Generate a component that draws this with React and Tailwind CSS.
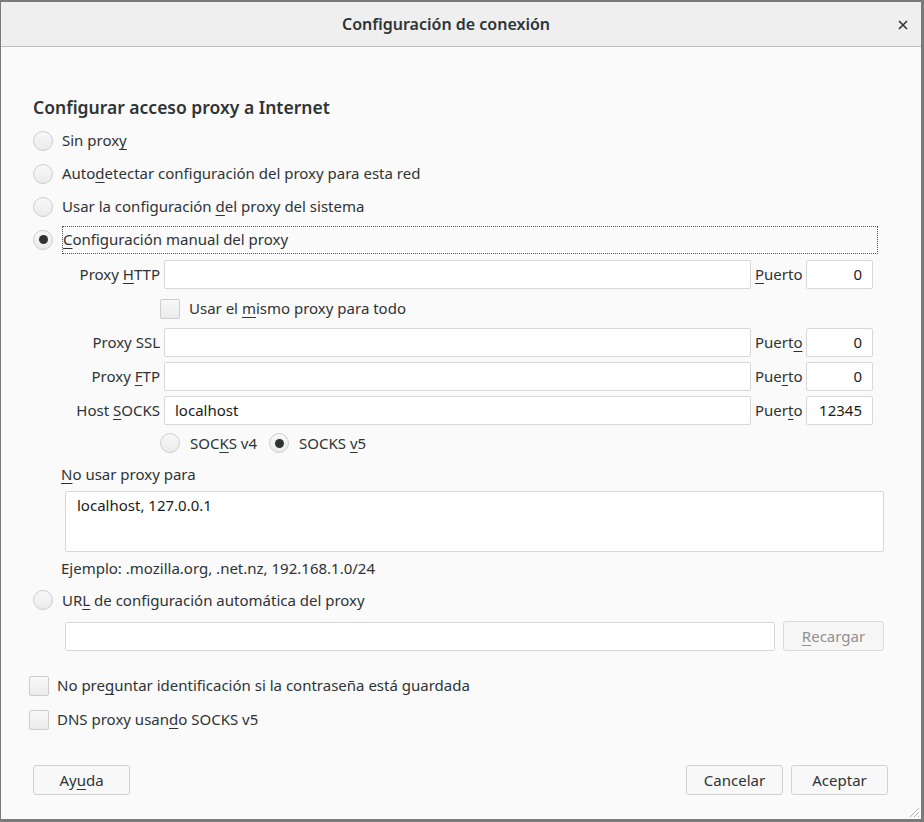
import React from "react";

const U = ({ children }) => (
  <span className="underline decoration-1 underline-offset-[3px]">{children}</span>
);

const Radio = ({ checked }) => (
  <span className="flex h-[20px] w-[20px] shrink-0 items-center justify-center rounded-full border border-[#cdcdcd] bg-gradient-to-b from-[#f8f8f8] to-[#ebebeb]">
    {checked && <span className="h-[9px] w-[9px] rounded-full bg-[#2e3436]"></span>}
  </span>
);

const Check = () => (
  <span className="block h-[20px] w-[20px] shrink-0 rounded-[2px] border border-[#cdcdcd] bg-gradient-to-b from-[#f8f8f8] to-[#ebebeb]"></span>
);

const Input = ({ value, className = "", right }) => (
  <div
    className={`flex h-[29px] items-center overflow-hidden whitespace-nowrap rounded-[2px] border border-[#d8d8d8] bg-white px-[10px] text-[#1b1b1b] ${
      right ? "justify-end" : ""
    } ${className}`}
  >
    {value}
  </div>
);

const ProxyRow = ({ label, value, port, puerto }) => (
  <div className="flex h-[29px] items-center">
    <div className="w-[103px] whitespace-nowrap pr-[4px] text-right">{label}</div>
    <Input value={value} className="flex-1" />
    <div className="w-[55px] pl-[4px]">{puerto}</div>
    <Input value={port} right className="w-[67px]" />
  </div>
);

export default function App() {
  return (
    <div
      className="h-[822px] w-[924px] bg-[#7a7a7a] pb-[3px] pl-[1px] pr-[3px] pt-[2px] text-[15px] text-[#2e3436]"
      style={{ fontFamily: '"Noto Sans", "Open Sans", sans-serif' }}
    >
      <div className="relative flex h-full flex-col bg-[#fafafa]">
        {/* title bar */}
        <div className="relative flex h-[45px] shrink-0 items-center justify-center border-b border-[#bfbfbf] bg-[#efefef] pr-[30px]">
          <span className="text-[16px] font-semibold text-[#2e3436]">Configuración de conexión</span>
          <svg className="absolute right-[13px] top-[18px]" width="10" height="10" viewBox="0 0 10 10">
            <path d="M1 1 L9 9 M9 1 L1 9" stroke="#2e3436" strokeWidth="1.6" />
          </svg>
        </div>

        <div className="flex flex-col pl-[32px] pt-[48px]">
          <h2 className="h-[25px] text-[17.5px] font-semibold leading-[25px]">
            Configurar acceso proxy a Internet
          </h2>

          <div className="mt-[4px] flex flex-col">
            <label className="flex h-[33px] items-center gap-[9px]">
              <Radio />
              <span>Sin prox<U>y</U></span>
            </label>
            <label className="flex h-[33px] items-center gap-[9px]">
              <Radio />
              <span>Auto<U>d</U>etectar configuración del proxy para esta red</span>
            </label>
            <label className="flex h-[33px] items-center gap-[9px]">
              <Radio />
              <span>Usar la configuración <U>d</U>el proxy del sistema</span>
            </label>
            <label className="flex h-[33px] items-center gap-[9px]">
              <Radio checked />
              <span className="flex h-[28px] w-[816px] items-center border border-dotted border-[#555]">
                <span><U>C</U>onfiguración manual del proxy</span>
              </span>
            </label>
          </div>

          <div className="ml-[28px] mt-[4px] flex w-[812px] flex-col">
            <ProxyRow label={<>Proxy <U>H</U>TTP</>} value="" port="0" puerto={<><U>P</U>uerto</>} />
            <label className="flex h-[39px] items-center gap-[9px] pl-[99px]">
              <Check />
              <span>Usar el <U>m</U>ismo proxy para todo</span>
            </label>
            <div className="flex flex-col gap-[5px]">
              <ProxyRow label="Proxy SSL" value="" port="0" puerto={<>Puert<U>o</U></>} />
              <ProxyRow label={<>Proxy <U>F</U>TP</>} value="" port="0" puerto={<>Pue<U>r</U>to</>} />
              <ProxyRow label={<>Host <U>S</U>OCKS</>} value="localhost" port="12345" puerto={<>Puer<U>t</U>o</>} />
            </div>
            <div className="flex h-[36px] items-center pl-[99px]">
              <label className="flex items-center gap-[10px]">
                <Radio />
                <span>SOC<U>K</U>S v4</span>
              </label>
              <label className="ml-[12px] flex items-center gap-[10px]">
                <Radio checked />
                <span>SOCKS <U>v</U>5</span>
              </label>
            </div>
            <div className="flex h-[26px] items-center">
              <span><U>N</U>o usar proxy para</span>
            </div>
            <div className="ml-[4px] mt-[4px] h-[61px] w-[819px] rounded-[2px] border border-[#d8d8d8] bg-white px-[11px] pt-[2px] text-[#1b1b1b]">
              localhost, 127.0.0.1
            </div>
            <div className="flex h-[32px] items-center">Ejemplo: .mozilla.org, .net.nz, 192.168.1.0/24</div>
          </div>

          <label className="flex h-[32px] items-center gap-[9px]">
            <Radio />
            <span>UR<U>L</U> de configuración automática del proxy</span>
          </label>
          <div className="ml-[32px] mt-[5px] flex w-[819px] items-center">
            <Input value="" className="flex-1" />
            <button className="ml-[8px] flex h-[30px] w-[101px] items-center justify-center rounded-[3px] border border-[#dcdcdc] bg-[#f6f6f6] text-[#8f9193]">
              <span><U>R</U>ecargar</span>
            </button>
          </div>

          <label className="-ml-[4px] mt-[17px] flex h-[35px] items-center gap-[8px]">
            <Check />
            <span>No pre<U>g</U>untar identificación si la contraseña está guardada</span>
          </label>
          <label className="-ml-[4px] flex h-[33px] items-center gap-[8px]">
            <Check />
            <span>DNS proxy usan<U>d</U>o SOCKS v5</span>
          </label>

          <div className="mt-[29px] flex h-[30px] items-center pr-[33px]">
            <button className="flex h-[30px] w-[97px] items-center justify-center rounded-[3px] border border-[#d2d2d2] bg-[#f8f8f8]">
              <span>Ay<U>u</U>da</span>
            </button>
            <div className="flex-1"></div>
            <button className="flex h-[30px] w-[97px] items-center justify-center rounded-[3px] border border-[#d2d2d2] bg-[#f8f8f8]">
              Cancelar
            </button>
            <button className="ml-[8px] flex h-[30px] w-[97px] items-center justify-center rounded-[3px] border border-[#d2d2d2] bg-[#f8f8f8]">
              Aceptar
            </button>
          </div>
        </div>

        <svg className="absolute bottom-[1px] right-[1px]" width="13" height="13" viewBox="0 0 13 13">
          <path d="M12 3 L3 12 M12 7 L7 12 M12 11 L11 12" stroke="#b5b5b5" strokeWidth="1" />
        </svg>
      </div>
    </div>
  );
}
